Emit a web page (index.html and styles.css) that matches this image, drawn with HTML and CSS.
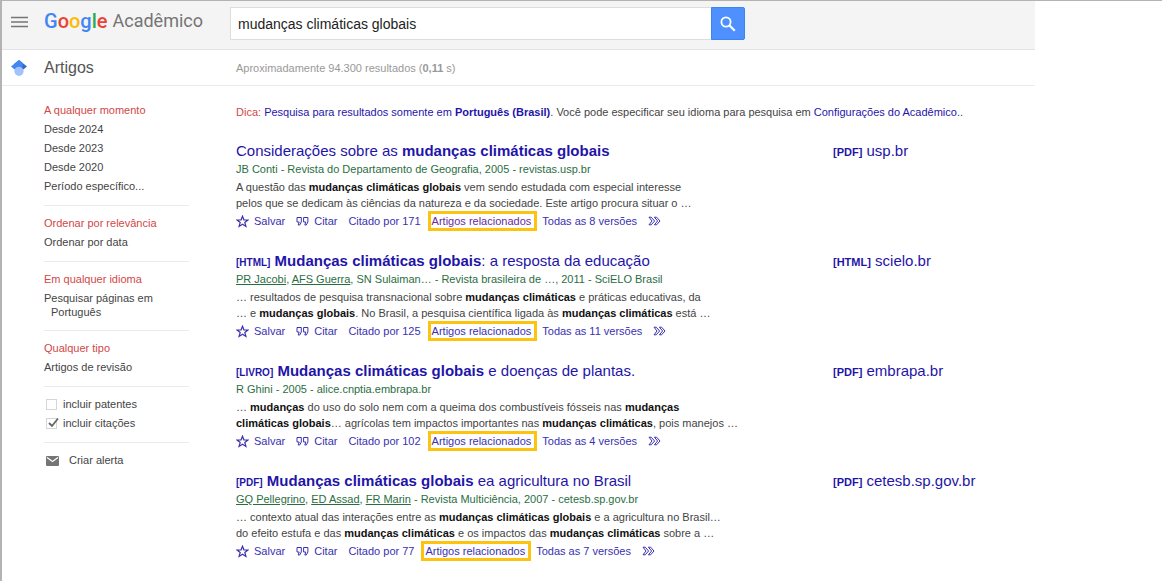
FILE: index.html
```
<!DOCTYPE html>
<html lang="pt-BR">
<head>
<meta charset="utf-8">
<title>Google Acadêmico</title>
<link rel="stylesheet" href="styles.css">
</head>
<body>
<svg class="sprite" aria-hidden="true">
  <symbol id="star" viewBox="0 0 13 13"><path d="M6.500 1.200L7.900 4.800L11.900 5L8.800 7.500L9.900 11.400L6.500 9.200L3.100 11.400L4.200 7.500L1.100 5L5.100 4.800Z" fill="none" stroke="currentColor" stroke-width="1.200"/></symbol>
  <symbol id="quote" viewBox="0 0 13 11"><path d="M1 1.500H5.300V6L3.700 9H2.200L3.200 6H1ZM7.600 1.500H11.900V6L10.300 9H8.800L9.800 6H7.600Z" fill="none" stroke="currentColor" stroke-width="1"/></symbol>
  <symbol id="more" viewBox="0 0 13 10"><path d="M1 1.200H3.200L6.600 5L3.200 8.800H1L4 5ZM6.400 1.200H8.600L12 5L8.600 8.800H6.400L9.600 5Z" fill="none" stroke="currentColor" stroke-width="1"/></symbol>
</svg>
<div class="page">
  <header class="top">
    <button class="menu" type="button" aria-label="Menu"><svg width="17" height="12" viewBox="0 0 17 12"><path d="M0 1.500H17M0 6H17M0 10.500H17" stroke="#757575" stroke-width="1.700"/></svg></button>
    <a class="logo" href="#"><span class="google"><span class="blue">G</span><span class="red">o</span><span class="yellow">o</span><span class="blue">g</span><span class="green">l</span><span class="red">e</span></span><span class="academic">Acadêmico</span></a>
    <form class="search">
      <input class="query" type="text" value="mudanças climáticas globais" aria-label="Pesquisar">
      <button class="go" type="button" aria-label="Pesquisar"><svg width="16" height="16" viewBox="0 0 16 16"><circle cx="6" cy="6" r="4.600" fill="none" stroke="#fff" stroke-width="1.800"/><path d="M9.300 9.300L14.800 14.800" stroke="#fff" stroke-width="2.200"/></svg></button>
    </form>
  </header>
  <div class="bar">
    <svg class="cap" width="16" height="16" viewBox="0 0 16 16"><path d="M8 0L0 6.500L8 13Z" fill="#4285f4"/><path d="M8 0L16 6.500L8 13Z" fill="#356ac3"/><path d="M8 0L3 4.100L8 7L11.500 7L12 3.300Z" fill="#4285f4"/><circle cx="8" cy="11.300" r="4.600" fill="#a0c3ff"/></svg>
    <h1 class="section">Artigos</h1>
    <p class="count">Aproximadamente 94.300 resultados (<b>0,11</b> s)</p>
  </div>
  <div class="body">
    <nav class="side">
      <ul class="group">
        <li class="row"><a class="current" href="#">A qualquer momento</a></li>
        <li class="row"><a href="#">Desde 2024</a></li>
        <li class="row"><a href="#">Desde 2023</a></li>
        <li class="row"><a href="#">Desde 2020</a></li>
        <li class="row"><a href="#">Período específico...</a></li>
      </ul>
      <ul class="group">
        <li class="row"><a class="current" href="#">Ordenar por relevância</a></li>
        <li class="row"><a href="#">Ordenar por data</a></li>
      </ul>
      <ul class="group">
        <li class="row"><a class="current" href="#">Em qualquer idioma</a></li>
        <li class="row wrapped"><a href="#">Pesquisar páginas em<br>Português</a></li>
      </ul>
      <ul class="group">
        <li class="row"><a class="current" href="#">Qualquer tipo</a></li>
        <li class="row"><a href="#">Artigos de revisão</a></li>
      </ul>
      <ul class="group">
        <li class="row"><label class="check"><input type="checkbox"><svg class="tick" width="14" height="12" viewBox="0 0 14 12"><path d="M3 6L6 9L12 1.500" fill="none" stroke="#666" stroke-width="1.800"/></svg>incluir patentes</label></li>
        <li class="row"><label class="check"><input type="checkbox" checked><svg class="tick" width="14" height="12" viewBox="0 0 14 12"><path d="M3 6L6 9L12 1.500" fill="none" stroke="#666" stroke-width="1.800"/></svg>incluir citações</label></li>
      </ul>
      <ul class="group">
        <li class="row"><a class="alert" href="#"><svg width="13" height="10" viewBox="0 0 13 10"><rect width="13" height="10" rx="1" fill="#757575"/><path d="M1 1.500L6.500 5.500L12 1.500" fill="none" stroke="#fff" stroke-width="1.200"/></svg>Criar alerta</a></li>
      </ul>
    </nav>
    <main class="results">
      <p class="tip"><span class="current">Dica:</span> <a href="#">Pesquisa para resultados somente em <b>Português (Brasil)</b></a>. Você pode especificar seu idioma para pesquisa em <a href="#">Configurações do Acadêmico</a>..</p>

      <article class="result">
        <div class="entry">
          <h2 class="title"><a href="#">Considerações sobre as <b>mudanças climáticas globais</b></a></h2>
          <p class="source">JB Conti - Revista do Departamento de Geografia, 2005 - revistas.usp.br</p>
          <p class="snippet">A questão das <b>mudanças climáticas globais</b> vem sendo estudada com especial interesse<br>pelos que se dedicam às ciências da natureza e da sociedade. Este artigo procura situar o …</p>
          <div class="actions"><a href="#"><svg class="star"><use href="#star"/></svg>Salvar</a><a href="#"><svg class="quote"><use href="#quote"/></svg>Citar</a><a href="#">Citado por 171</a><a class="related visited" href="#">Artigos relacionados</a><a href="#">Todas as 8 versões</a><a class="extra" href="#" aria-label="Mais"><svg class="more"><use href="#more"/></svg></a></div>
        </div>
        <a class="file" href="#"><b>[PDF]</b> usp.br</a>
      </article>

      <article class="result">
        <div class="entry">
          <h2 class="title"><span class="kind">[HTML]</span> <a href="#"><b>Mudanças climáticas globais</b>: a resposta da educação</a></h2>
          <p class="source"><a href="#">PR Jacobi</a>, <a href="#">AFS Guerra</a>, SN Sulaiman… - Revista brasileira de …, 2011 - SciELO Brasil</p>
          <p class="snippet">… resultados de pesquisa transnacional sobre <b>mudanças climáticas</b> e práticas educativas, da<br>… e <b>mudanças globais</b>. No Brasil, a pesquisa científica ligada às <b>mudanças climáticas</b> está …</p>
          <div class="actions"><a href="#"><svg class="star"><use href="#star"/></svg>Salvar</a><a href="#"><svg class="quote"><use href="#quote"/></svg>Citar</a><a href="#">Citado por 125</a><a class="related" href="#">Artigos relacionados</a><a href="#">Todas as 11 versões</a><a class="extra" href="#" aria-label="Mais"><svg class="more"><use href="#more"/></svg></a></div>
        </div>
        <a class="file" href="#"><b>[HTML]</b> scielo.br</a>
      </article>

      <article class="result">
        <div class="entry">
          <h2 class="title"><span class="kind">[LIVRO]</span> <a href="#"><b>Mudanças climáticas globais</b> e doenças de plantas.</a></h2>
          <p class="source">R Ghini - 2005 - alice.cnptia.embrapa.br</p>
          <p class="snippet">… <b>mudanças</b> do uso do solo nem com a queima dos combustíveis fósseis nas <b>mudanças</b><br><b>climáticas globais</b>… agrícolas tem impactos importantes nas <b>mudanças climáticas</b>, pois manejos …</p>
          <div class="actions"><a href="#"><svg class="star"><use href="#star"/></svg>Salvar</a><a href="#"><svg class="quote"><use href="#quote"/></svg>Citar</a><a href="#">Citado por 102</a><a class="related" href="#">Artigos relacionados</a><a href="#">Todas as 4 versões</a><a class="extra" href="#" aria-label="Mais"><svg class="more"><use href="#more"/></svg></a></div>
        </div>
        <a class="file" href="#"><b>[PDF]</b> embrapa.br</a>
      </article>

      <article class="result">
        <div class="entry">
          <h2 class="title"><span class="kind">[PDF]</span> <a href="#"><b>Mudanças climáticas globais</b> ea agricultura no Brasil</a></h2>
          <p class="source"><a href="#">GQ Pellegrino</a>, <a href="#">ED Assad</a>, <a href="#">FR Marin</a> - Revista Multiciência, 2007 - cetesb.sp.gov.br</p>
          <p class="snippet">… contexto atual das interações entre as <b>mudanças climáticas globais</b> e a agricultura no Brasil…<br>do efeito estufa e das <b>mudanças climáticas</b> e os impactos das <b>mudanças climáticas</b> sobre a …</p>
          <div class="actions"><a href="#"><svg class="star"><use href="#star"/></svg>Salvar</a><a href="#"><svg class="quote"><use href="#quote"/></svg>Citar</a><a href="#">Citado por 77</a><a class="related" href="#">Artigos relacionados</a><a href="#">Todas as 7 versões</a><a class="extra" href="#" aria-label="Mais"><svg class="more"><use href="#more"/></svg></a></div>
        </div>
        <a class="file" href="#"><b>[PDF]</b> cetesb.sp.gov.br</a>
      </article>
    </main>
  </div>
</div>
</body>
</html>
```
FILE: styles.css
```
* { box-sizing: border-box; }
body {
  margin: 0;
  min-height: 100vh;
  border-top: 1px solid #b3b3b3;
  border-left: 2px solid #b3b3b3;
  background: #fff;
  color: #444;
  font: 11px/16px "Liberation Sans", Arial, sans-serif;
}
h1, h2, p, ul { margin: 0; padding: 0; font-weight: normal; }
ul { list-style: none; }
a { color: #1f15a8; text-decoration: none; }
button { border: 0; padding: 0; background: none; }
svg { display: block; flex: none; }
.sprite { position: absolute; width: 0; height: 0; }
.page { margin-right: 127px; }

.top {
  display: flex;
  height: 49px;
  padding-left: 9px;
  background: #f4f4f4;
  border-bottom: 1px solid #e3e3e3;
}
.menu { width: 17px; height: 41px; }
.logo {
  display: flex;
  gap: 5px;
  width: 202px;
  padding-left: 16px;
  font: 18px/40px Roboto, sans-serif;
}
.google { font-size: 20px; font-weight: 500; }
.academic { color: #757575; }
.blue { color: #4285f4; }
.red { color: #ea4335; }
.yellow { color: #fbbc05; }
.green { color: #34a853; }
.search { display: flex; height: 33px; margin-top: 6px; width: 515px; }
.query {
  flex: 1;
  min-width: 0;
  padding: 0 7px;
  border: 1px solid #ddd;
  border-right: 0;
  color: #222;
  font: 14px "Liberation Sans", Arial, sans-serif;
}
.go {
  display: flex;
  align-items: center;
  justify-content: center;
  width: 34px;
  border: 1px solid #3f83f0;
  border-radius: 0 2px 2px 0;
  background: #4d90fe;
}

.bar {
  display: flex;
  align-items: center;
  height: 36px;
  padding-left: 9px;
  border-bottom: 1px solid #ebebeb;
}
.section { width: 192px; margin-left: 17px; color: #555; font-size: 16px; }
.count { color: #999; }

.body { display: flex; }
.side { width: 145px; margin: 15px 47px 0 42px; }
.group { padding-bottom: 9px; margin-bottom: 8px; border-bottom: 1px solid #ebebeb; }
.group:last-child { border: 0; }
.row { line-height: 19px; }
.row a { color: #444; }
.row .current, .current { color: #d14848; }
.wrapped { padding: 2px 0 2px 7px; line-height: 14px; text-indent: -7px; }
.wrapped a { display: block; }
.check { display: flex; align-items: center; gap: 3px; padding-left: 2px; }
.check input {
  appearance: none;
  width: 11px;
  height: 11px;
  margin: 0;
  border: 1px solid #d5d5d5;
  background: #fff;
}
.tick { margin: -2px 0 0 -14px; visibility: hidden; }
input:checked + .tick { visibility: visible; }
.row .alert { display: flex; align-items: center; gap: 10px; padding-left: 2px; }

.results { flex: 1; min-width: 0; }
.tip { margin: 18px 0 21px; }
.result { display: flex; margin-bottom: 20px; }
.entry { width: 597px; }
.title { font-size: 15px; line-height: 20px; }
.kind { color: #1f15a8; font-size: 10px; font-weight: bold; line-height: 1; }
.source, .source a { color: #2a6e3f; }
.source a { text-decoration: underline; }
.snippet { margin-top: 2px; }
.snippet b { color: #111; }
.actions { display: flex; align-items: center; gap: 11px; height: 20px; }
.actions a { display: flex; align-items: center; gap: 5px; color: #3a31b0; }
.star { width: 13px; height: 13px; }
.quote { width: 13px; height: 11px; }
.more { width: 13px; height: 10px; }
.actions .related {
  height: 20px;
  margin: 0 -6px 0 -4px;
  padding: 0 3px 0 1px;
  border: 3px solid #fdc311;
}
.actions .visited { color: #6b2a9c; }
.file { font-size: 15px; line-height: 20px; }
.file b { font-size: 11px; line-height: 1; }
```
